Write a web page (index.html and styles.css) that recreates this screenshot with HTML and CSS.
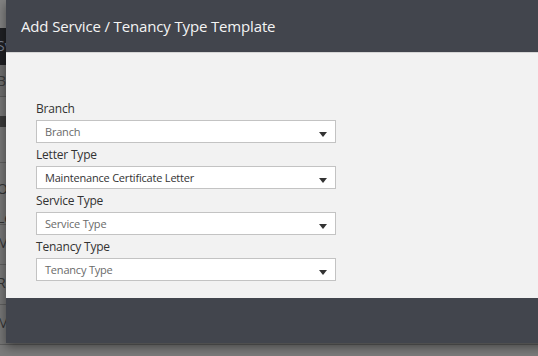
FILE: index.html
```html
<!DOCTYPE html>
<html lang="en">
<head>
    <meta charset="UTF-8">
    <title>Add Service / Tenancy Type Template</title>
    <link rel="stylesheet" href="styles.css">
</head>
<body>
    <div class="page">
        <div class="page-top"></div>
        <div class="page-nav"><span>Sv</span></div>
        <div class="page-crumb"><span>Br</span></div>
        <div class="page-gap"></div>
        <div class="page-head"></div>
        <div class="page-row short"></div>
        <div class="page-row tall"><span>Or</span><span>Le</span></div>
        <div class="page-row"><span>Mg</span></div>
        <div class="page-row"><span>Re</span></div>
        <div class="page-row"><span>M</span></div>
    </div>

    <div class="modal">
        <div class="modal-header">
            <h4>Add Service / Tenancy Type Template</h4>
        </div>
        <div class="modal-body">
            <label>Branch</label>
            <div class="select placeholder"><span>Branch</span><i class="caret"></i></div>

            <label>Letter Type</label>
            <div class="select"><span>Maintenance Certificate Letter</span><i class="caret"></i></div>

            <label>Service Type</label>
            <div class="select placeholder"><span>Service Type</span><i class="caret"></i></div>

            <label>Tenancy Type</label>
            <div class="select placeholder"><span>Tenancy Type</span><i class="caret"></i></div>
        </div>
        <div class="modal-footer"></div>
    </div>
</body>
</html>
```

FILE: styles.css
```css
* {
    margin: 0;
    padding: 0;
    box-sizing: border-box;
    font-family: 'Open Sans', sans-serif;
}

body {
    background-color: #7b7b7b;
    overflow: hidden;
    height: 356px;
}

/* dimmed page behind the dialog */
.page {
    display: flex;
    flex-direction: column;
    overflow: hidden;
}

.page span {
    display: block;
    margin-left: -3px;
    font-size: 14px;
    line-height: 20px;
}

.page-top {
    height: 28px;
    background-color: #828282;
}

.page-nav {
    height: 37px;
    background-color: #1f2024;
    color: #7d8394;
    padding-top: 8px;
}

.page-crumb {
    height: 32px;
    background-color: #6e6e6e;
    color: #3a3a3a;
    padding-top: 6px;
    border-bottom: 1px solid #5a5a5a;
}

.page-gap {
    height: 19px;
    background-color: #777;
}

.page-head {
    height: 11px;
    background-color: #3b3b3b;
}

.page-row {
    height: 40px;
    color: #333;
    padding-top: 8px;
    border-bottom: 1px solid #5f5f5f;
    background-color: #777;
}

.page-row.short {
    height: 36px;
    padding: 0;
}

.page-row.tall {
    height: 62px;
    padding-top: 11px;
    line-height: 29px;
}

.page-row.tall span {
    line-height: 29px;
}

/* dialog */
.modal {
    position: absolute;
    top: 0;
    left: 6px;
    width: 560px;
    box-shadow: 0 4px 10px rgba(0, 0, 0, 0.45);
}

.modal-header {
    height: 53px;
    background-color: #42454d;
    padding: 15px 15px 0;
    border-bottom: 1px solid #d6d6d6;
}

.modal-header h4 {
    color: #f4f4f4;
    font-size: 15px;
    font-weight: 400;
    line-height: 22px;
    letter-spacing: -0.15px;
}

.modal-body {
    background-color: #f2f2f2;
    padding: 44px 230px 17px 30px;
    display: flex;
    flex-direction: column;
}

.modal-body label {
    color: #333;
    font-size: 12px;
    line-height: 23px;
    letter-spacing: -0.2px;
}

.select {
    width: 300px;
    height: 23px;
    background-color: #fff;
    border: 1px solid #c3c3c3;
    display: flex;
    align-items: center;
    justify-content: space-between;
    padding: 0 8px 0 8px;
    color: #333;
    font-size: 11px;
    letter-spacing: -0.2px;
}

.select.placeholder {
    color: #6a6a6a;
}

.caret {
    width: 0;
    height: 0;
    border-left: 4px solid transparent;
    border-right: 4px solid transparent;
    border-top: 5px solid #333;
    margin-top: 5px;
}

.modal-footer {
    height: 45px;
    background-color: #42454d;
}
```
